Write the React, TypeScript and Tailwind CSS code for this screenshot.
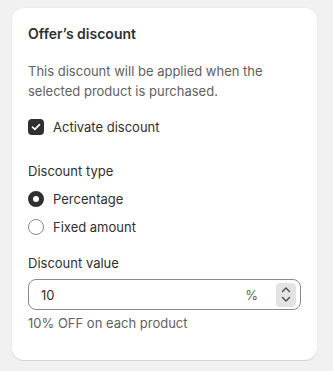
import { useState } from 'react';

const Chevron = ({ up }: { up?: boolean }) => (
  <svg width="10" height="7" viewBox="0 0 10 7" fill="none">
    <path
      d={up ? 'M1.5 5.5L5 2L8.5 5.5' : 'M1.5 1.5L5 5L8.5 1.5'}
      stroke="#4a4a4a"
      strokeWidth="1.4"
      strokeLinecap="round"
      strokeLinejoin="round"
    />
  </svg>
);

const App = () => {
  const [active, setActive] = useState(true);
  const [type, setType] = useState<'percentage' | 'fixed'>('percentage');
  const [value, setValue] = useState('10');

  return (
    <div className="min-h-[371px] bg-[#f1f1f1] px-3 pt-2 font-['Inter',sans-serif] text-[13px] leading-5 text-[#303030]">
      <div className="w-[305px] h-[352px] rounded-xl bg-white p-4 shadow-[0_1px_0_0_#d4d4d4,0_0_0_1px_#ececec]">
        <h2 className="text-sm font-semibold leading-5">Offer’s discount</h2>

        <p className="mt-[17px] text-[#616161]">
          This discount will be applied when the selected product is purchased.
        </p>

        <label className="mt-4 flex items-center gap-[9px] cursor-pointer">
          <span
            className={`flex h-4 w-4 items-center justify-center rounded-[4px] ${
              active ? 'bg-[#303030]' : 'border border-[#8a8a8a] bg-white'
            }`}
            onClick={() => setActive(!active)}
          >
            {active && (
              <svg width="10" height="8" viewBox="0 0 10 8" fill="none">
                <path d="M1.5 4.2L3.8 6.3L8.5 1.7" stroke="white" strokeWidth="1.7" strokeLinecap="round" strokeLinejoin="round" />
              </svg>
            )}
          </span>
          <span>Activate discount</span>
        </label>

        <div className="mt-6">
          <div>Discount type</div>
          <div className="mt-2 flex flex-col gap-2">
            <label className="flex items-center gap-[9px] cursor-pointer" onClick={() => setType('percentage')}>
              <span
                className={`h-4 w-4 rounded-full bg-white ${
                  type === 'percentage' ? 'border-[5px] border-[#303030]' : 'border border-[#8a8a8a]'
                }`}
              />
              <span>Percentage</span>
            </label>
            <label className="flex items-center gap-[9px] cursor-pointer" onClick={() => setType('fixed')}>
              <span
                className={`h-4 w-4 rounded-full bg-white ${
                  type === 'fixed' ? 'border-[5px] border-[#303030]' : 'border border-[#8a8a8a]'
                }`}
              />
              <span>Fixed amount</span>
            </label>
          </div>
        </div>

        <div className="mt-4">
          <div>Discount value</div>
          <div className="mt-[6px] flex h-[31px] items-center rounded-lg border border-[#8a8a8a] pl-3 pr-[4px]">
            <input
              className="min-w-0 flex-1 bg-transparent outline-none"
              value={value}
              onChange={(e) => setValue(e.target.value)}
            />
            <span className="text-[#616161]">%</span>
            <div className="ml-[18px] flex h-6 w-5 flex-col items-center justify-center gap-[3px] rounded-[4px] bg-[#e3e3e3]">
              <Chevron up />
              <Chevron />
            </div>
          </div>
          <p className="mt-[3px] text-[#616161]">{value}% OFF on each product</p>
        </div>
      </div>
    </div>
  );
};

export default App;
